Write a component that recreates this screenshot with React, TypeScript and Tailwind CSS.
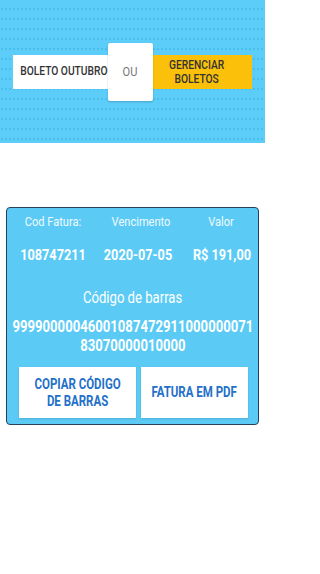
const sq = "inline-block scale-x-[0.82]";

export default function App() {
  return (
    <div className="min-h-[574px] w-[265px] overflow-hidden bg-white font-['Roboto',sans-serif]">
      {/* topo com os botões */}
      <div className="flex h-[143px] items-center justify-center bg-[#5bcdf8] bg-[radial-gradient(circle,#4bbfec_0.9px,transparent_1.2px)] bg-[length:4px_10px] bg-[position:0_4px] px-[13px]">
        <div className="flex flex-1 items-center">
          <div className="flex h-[34px] w-[95px] items-center justify-end bg-white text-[12.5px] font-medium text-[#333]">
            <span className={sq + " origin-right whitespace-nowrap"}>BOLETO OUTUBRO</span>
          </div>
          <div className="z-10 flex h-[58px] w-[45px] items-center justify-center rounded-[2px] bg-white text-[13.5px] text-[#777] shadow-[0_1px_2px_rgba(0,0,0,0.2)]">
            <span className={sq}>OU</span>
          </div>
          <div className="flex h-[34px] flex-1 items-center justify-center bg-[#fbc10a] pr-[12px] text-center text-[12.5px] font-medium leading-[14px] text-[#333]">
            <span className={sq}>
              GERENCIAR
              <br />
              BOLETOS
            </span>
          </div>
        </div>
      </div>

      <div className="px-[6px] pt-[64px]">
        <div className="rounded-[4px] border border-[#27405e] bg-[#5bcbf6] px-[4px] pb-[6px] pt-[3px] text-white">
          <div className="grid grid-cols-[repeat(3,84px)] text-center text-[13.5px] leading-[20px] text-[#effaff]">
            <span className={sq}>Cod Fatura:</span>
            <span className={sq + " translate-x-[4px]"}>Vencimento</span>
            <span className={sq}>Valor</span>
          </div>
          <div className="mt-[14px] grid grid-cols-[repeat(3,84px)] text-center text-[15.5px] font-bold leading-[20px]">
            <span className={sq}>108747211</span>
            <span className={sq + " translate-x-[1px]"}>2020-07-05</span>
            <span className={sq + " translate-x-[1px]"}>R$ 191,00</span>
          </div>
          <div className="mt-[23px] text-center text-[16px] leading-[20px]">
            <span className={sq}>Código de barras</span>
          </div>
          <div className="mt-[9px] flex justify-center text-center text-[16px] font-bold leading-[19px]">
            <span className={sq + " shrink-0 whitespace-nowrap"}>
              99990000046001087472911000000071
              <br />
              83070000010000
            </span>
          </div>
          <div className="mt-[12px] flex gap-[5px] pl-[8px] pr-[6px]">
            <button className="flex h-[51px] w-[117px] items-center justify-center bg-white text-center text-[14px] font-bold leading-[17px] text-[#2370c9] shadow-[0_1px_2px_rgba(0,0,0,0.15)]">
              <span className={sq + " whitespace-nowrap"}>
                COPIAR CÓDIGO
                <br />
                DE BARRAS
              </span>
            </button>
            <button className="flex h-[51px] flex-1 items-center justify-center bg-white text-[14px] font-bold text-[#2370c9] shadow-[0_1px_2px_rgba(0,0,0,0.15)]">
              <span className={sq + " whitespace-nowrap"}>FATURA EM PDF</span>
            </button>
          </div>
        </div>
      </div>
    </div>
  );
}
